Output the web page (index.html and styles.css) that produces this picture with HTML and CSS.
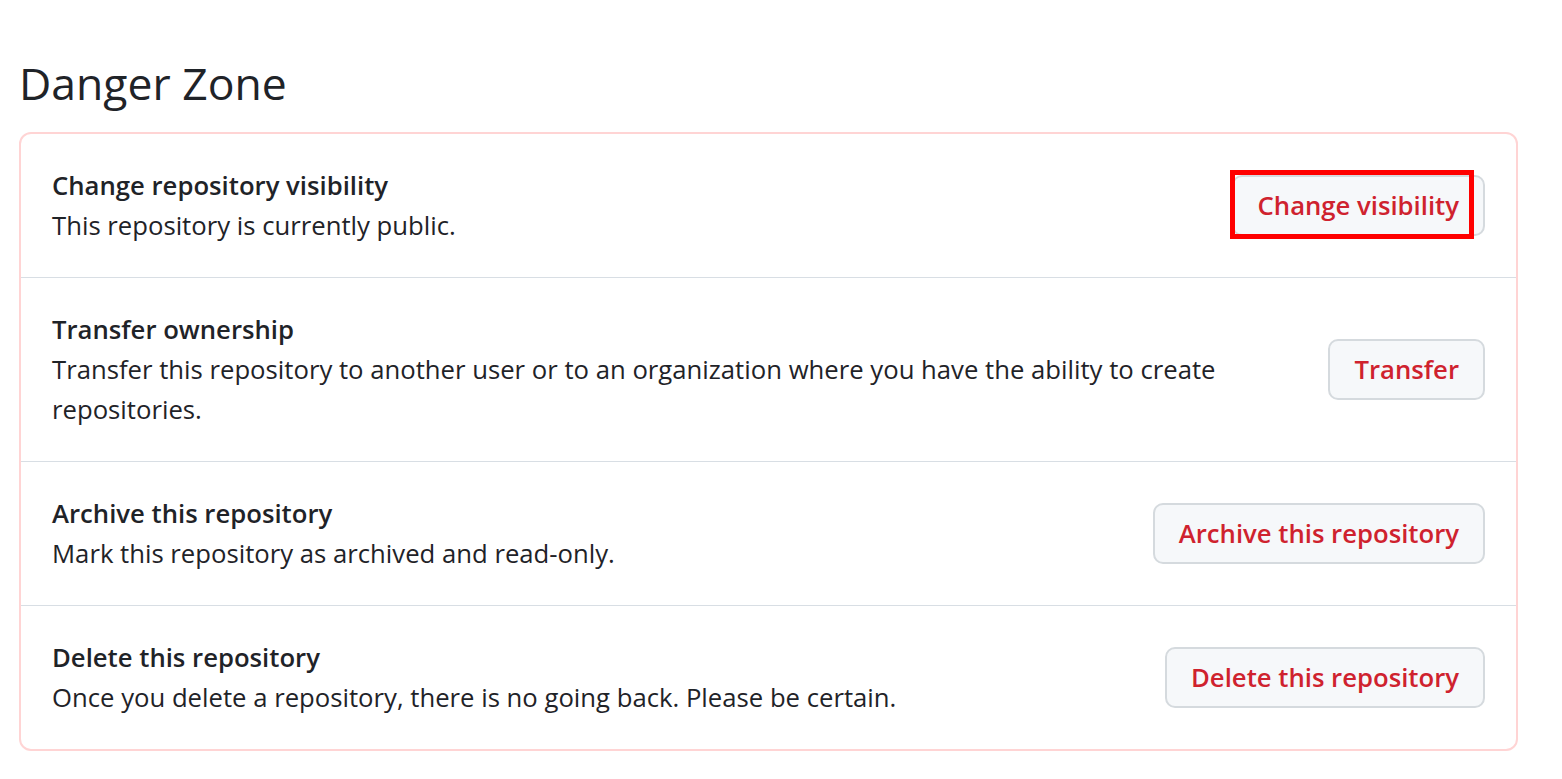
FILE: index.html
```html
<!DOCTYPE html>
<html lang="en">
<head>
    <meta charset="UTF-8">
    <meta name="viewport" content="width=device-width, initial-scale=1.0">
    <title>Danger Zone</title>
    <link rel="stylesheet" href="styles.css">
</head>
<body>
    <main>
        <h2 class="zone-title">Danger Zone</h2>
        <section class="danger-box">
            <div class="danger-row">
                <div class="row-text">
                    <strong>Change repository visibility</strong>
                    <p>This repository is currently public.</p>
                </div>
                <div class="btn-wrap">
                    <button class="danger-btn">Change visibility</button>
                    <span class="highlight"></span>
                </div>
            </div>
            <div class="danger-row">
                <div class="row-text">
                    <strong>Transfer ownership</strong>
                    <p>Transfer this repository to another user or to an organization where you have the ability to create repositories.</p>
                </div>
                <button class="danger-btn">Transfer</button>
            </div>
            <div class="danger-row">
                <div class="row-text">
                    <strong>Archive this repository</strong>
                    <p>Mark this repository as archived and read-only.</p>
                </div>
                <button class="danger-btn">Archive this repository</button>
            </div>
            <div class="danger-row">
                <div class="row-text">
                    <strong>Delete this repository</strong>
                    <p>Once you delete a repository, there is no going back. Please be certain.</p>
                </div>
                <button class="danger-btn">Delete this repository</button>
            </div>
        </section>
    </main>
</body>
</html>
```

FILE: styles.css
```css
* {
    padding: 0;
    margin: 0;
    box-sizing: border-box;
    font-family: "Open Sans", "Noto Sans", sans-serif;
}
body {
    background-color: #fff;
    color: #1f2328;
}
main {
    width: 1562px;
    padding: 53px 44px 0 19px;
}
.zone-title {
    font-size: 44.5px;
    font-weight: 400;
    line-height: 60px;
    margin-bottom: 19px;
}
.danger-box {
    border: 2px solid #ffd4d4;
    border-radius: 12px;
}
.danger-row {
    display: flex;
    align-items: center;
    justify-content: space-between;
    gap: 40px;
    padding: 31.5px 31px;
    border-top: 1px solid #d8dee4;
}
.danger-row:first-child {
    border-top: none;
}
.row-text {
    font-size: 25.7px;
    line-height: 40px;
    max-width: 1200px;
}
.row-text strong {
    display: block;
    font-weight: 600;
}
.btn-wrap {
    position: relative;
}
.danger-btn {
    height: 61px;
    padding: 0 24px;
    font-size: 25.7px;
    font-weight: 600;
    color: #cf222e;
    background-color: #f6f8fa;
    border: 2px solid #d5dade;
    border-radius: 10px;
    white-space: nowrap;
}
.highlight {
    position: absolute;
    left: -2px;
    top: -5px;
    width: 244px;
    height: 69px;
    border: 5px solid #ff0000;
}
```
